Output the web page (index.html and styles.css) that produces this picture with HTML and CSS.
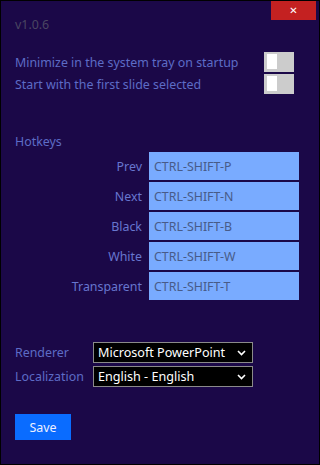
FILE: index.html
```html
<!DOCTYPE html>
<html>
    <head>
        <meta charset="utf-8">
        <meta name="viewport" content="width=device-width, initial-scale=1.0">
        <title>Settings</title>
        <link rel="stylesheet" href="styles.css">
    </head>
    <body>
        <div class="window">
            <div class="header">
                <span class="version">v1.0.6</span>
                <button class="close" type="button">&#x2715;</button>
            </div>

            <div class="options">
                <div class="option">
                    <span>Minimize in the system tray on startup</span>
                    <span class="toggle"><span class="knob"></span></span>
                </div>
                <div class="option">
                    <span>Start with the first slide selected</span>
                    <span class="toggle"><span class="knob"></span></span>
                </div>
            </div>

            <div class="section-title">Hotkeys</div>
            <div class="hotkeys">
                <label>Prev</label><input type="text" value="CTRL-SHIFT-P">
                <label>Next</label><input type="text" value="CTRL-SHIFT-N">
                <label>Black</label><input type="text" value="CTRL-SHIFT-B">
                <label>White</label><input type="text" value="CTRL-SHIFT-W">
                <label>Transparent</label><input type="text" value="CTRL-SHIFT-T">
            </div>

            <div class="selects">
                <label>Renderer</label>
                <div class="select-wrap">
                    <select><option>Microsoft PowerPoint</option></select>
                    <svg class="chevron" width="9" height="6" viewBox="0 0 9 6"><path d="M1 1 L4.5 4.5 L8 1" fill="none" stroke="#fff" stroke-width="1.6"/></svg>
                </div>
                <label>Localization</label>
                <div class="select-wrap">
                    <select><option>English - English</option></select>
                    <svg class="chevron" width="9" height="6" viewBox="0 0 9 6"><path d="M1 1 L4.5 4.5 L8 1" fill="none" stroke="#fff" stroke-width="1.6"/></svg>
                </div>
            </div>

            <button class="save" type="button">Save</button>
        </div>
    </body>
</html>
```

FILE: styles.css
```css
body {
    margin: 0;
    background: #1b0848;
    font-family: "Noto Sans", "Open Sans", sans-serif;
    font-size: 12.4px;
}

.window {
    box-sizing: border-box;
    width: 320px;
    height: 465px;
    border: 1px solid #000;
    background: #1b0848;
    color: #5d6cc6;
}

.header {
    display: flex;
    justify-content: space-between;
    align-items: flex-start;
    padding-left: 14px;
}

.version {
    margin-top: 15px;
    line-height: 18px;
    color: #4a4662;
}

.close {
    width: 45px;
    height: 19px;
    margin-right: 3px;
    padding: 0;
    border: 0;
    background: #c42121;
    color: #fff;
    font-size: 10px;
    font-family: "DejaVu Sans", sans-serif;
    line-height: 19px;
}

.options {
    display: flex;
    flex-direction: column;
    gap: 2px;
    margin-top: 18px;
    padding: 0 25px 0 14px;
}

.option {
    display: flex;
    justify-content: space-between;
    align-items: center;
    height: 20px;
}

.toggle {
    display: flex;
    box-sizing: border-box;
    width: 30px;
    height: 20px;
    padding: 2px 3px;
    background: #cccccc;
}

.knob {
    width: 10px;
    height: 15px;
    background: #fff;
}

.section-title {
    margin-top: 39px;
    padding-left: 14px;
    line-height: 18px;
}

.hotkeys {
    display: grid;
    grid-template-columns: 127px 150px;
    column-gap: 7px;
    row-gap: 2px;
    align-items: center;
    margin-top: 1px;
    padding-left: 14px;
}

.hotkeys label {
    text-align: right;
    color: #6776cf;
}

.hotkeys input {
    box-sizing: border-box;
    height: 28px;
    padding: 0 5px;
    border: 0;
    outline: none;
    background: #79abff;
    color: #485b88;
    font: inherit;
}

.selects {
    display: grid;
    grid-template-columns: 78px 160px;
    row-gap: 3px;
    align-items: center;
    margin-top: 42px;
    padding-left: 14px;
}

.select-wrap {
    position: relative;
    height: 21px;
}

.select-wrap select {
    box-sizing: border-box;
    width: 160px;
    height: 21px;
    padding: 0 0 0 4px;
    border: 1px solid #8a8a8a;
    border-radius: 0;
    background: #000;
    color: #fff;
    font: inherit;
    font-size: 12.6px;
    appearance: none;
    -webkit-appearance: none;
}

.chevron {
    position: absolute;
    top: 8px;
    right: 7px;
}

.save {
    display: block;
    width: 56px;
    height: 26px;
    margin: 27px 0 0 14px;
    padding: 0;
    border: 0;
    background: #0a6cff;
    color: #eef0ff;
    font: inherit;
}
```
